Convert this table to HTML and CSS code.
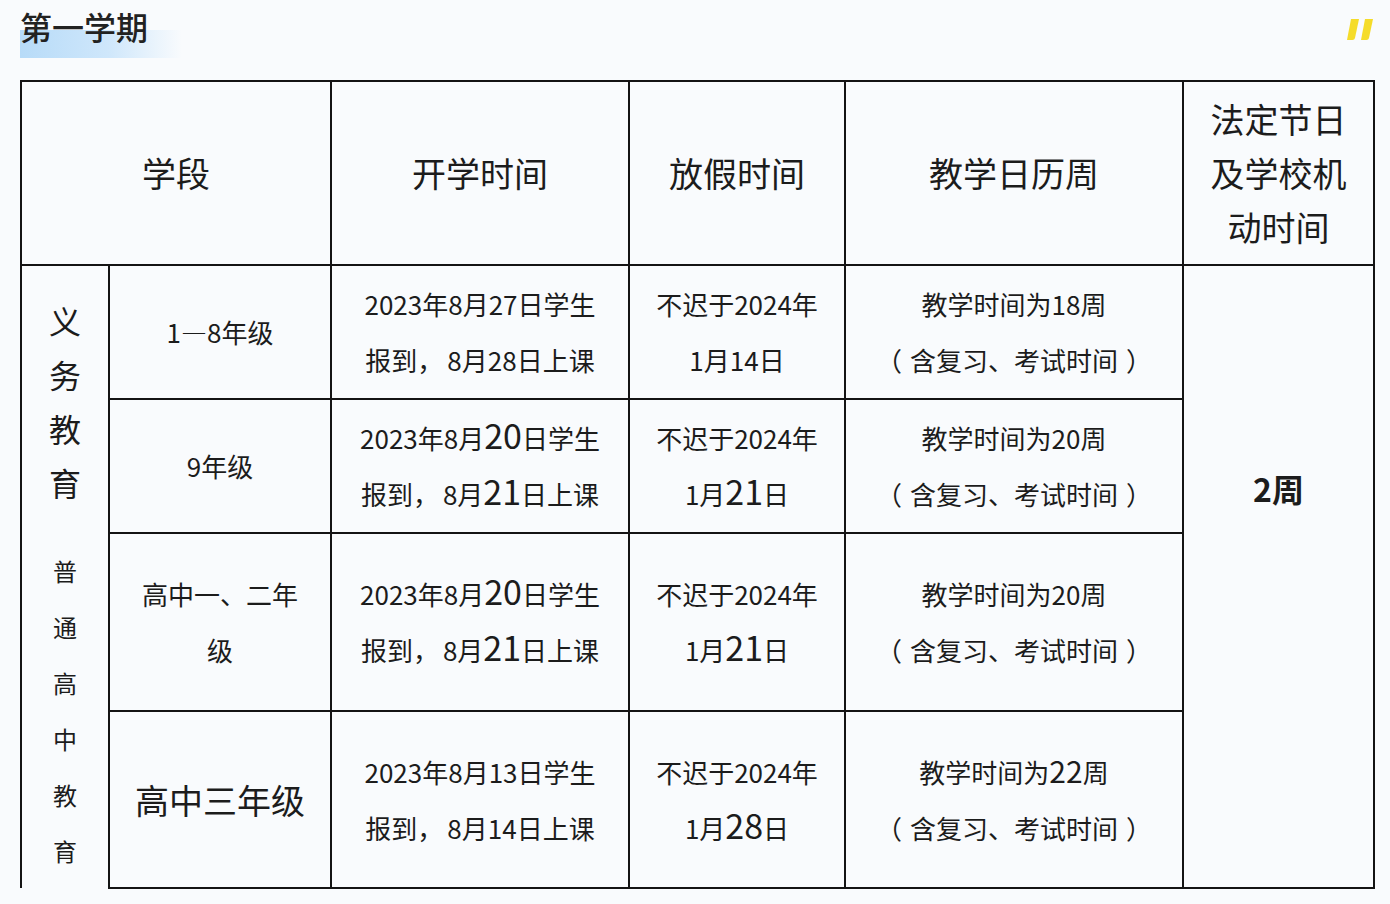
FILE: index.html
```html
<!DOCTYPE html>
<html lang="zh-CN">
<head>
<meta charset="utf-8">
<title>第一学期</title>
<link rel="stylesheet" href="styles.css">
</head>
<body>
<div class="page">
  <div class="top">
    <h1 class="title"><span class="title-hl"></span><span class="title-text">第一学期</span></h1>
    <svg class="quote" width="32" height="22" viewBox="0 0 32 22" aria-hidden="true">
      <path d="M7 0 H15 L11 19 Q10.5 21 8.5 21 H3 Z" fill="#f5dc2a"/>
      <path d="M21 0 H29 L25 19 Q24.5 21 22.5 21 H17 Z" fill="#f5dc2a"/>
    </svg>
  </div>
  <table class="cal">
    <colgroup>
      <col class="c1"><col class="c2"><col class="c3"><col class="c4"><col class="c5"><col class="c6">
    </colgroup>
    <tr class="r-head">
      <th colspan="2">学段</th>
      <th>开学时间</th>
      <th>放假时间</th>
      <th>教学日历周</th>
      <th class="holiday">法定节日<br>及学校机<br>动时间</th>
    </tr>
    <tr class="r1">
      <td rowspan="4" class="stage">
        <div class="stage-a"><span>义</span><span>务</span><span>教</span><span>育</span></div>
        <div class="stage-b"><span>普</span><span>通</span><span>高</span><span>中</span><span>教</span><span>育</span></div>
      </td>
      <td>1—8年级</td>
      <td>2023年8月27日学生<br>报到<span class="cm">，</span>8月28日上课</td>
      <td>不迟于2024年<br>1月14日</td>
      <td>教学时间为18周<br><span class="pl">（</span>含复习、考试时间<span class="pr">）</span></td>
      <td rowspan="4" class="weeks">2周</td>
    </tr>
    <tr class="r2">
      <td>9年级</td>
      <td>2023年8月<span class="big">20</span>日学生<br>报到<span class="cm">，</span>8月<span class="big">21</span>日上课</td>
      <td>不迟于2024年<br>1月<span class="big">21</span>日</td>
      <td>教学时间为20周<br><span class="pl">（</span>含复习、考试时间<span class="pr">）</span></td>
    </tr>
    <tr class="r3">
      <td>高中一、二年<br>级</td>
      <td>2023年8月<span class="big">20</span>日学生<br>报到<span class="cm">，</span>8月<span class="big">21</span>日上课</td>
      <td>不迟于2024年<br>1月<span class="big">21</span>日</td>
      <td>教学时间为20周<br><span class="pl">（</span>含复习、考试时间<span class="pr">）</span></td>
    </tr>
    <tr class="r4">
      <td class="grade-lg">高中三年级</td>
      <td>2023年8月13日学生<br>报到<span class="cm">，</span>8月14日上课</td>
      <td>不迟于2024年<br>1月<span class="big">28</span>日</td>
      <td>教学时间为<span class="mid">22</span>周<br><span class="pl">（</span>含复习、考试时间<span class="pr">）</span></td>
    </tr>
  </table>
</div>
</body>
</html>
```

FILE: styles.css
```css
html, body {
  margin: 0;
  padding: 0;
  background: #f9fbfd;
}
body {
  font-family: "Noto Sans CJK SC", "Noto Sans", sans-serif;
  color: #1c1c1c;
  text-spacing-trim: space-all;
}
.page {
  padding: 0 14px 0 20px;
}
.top {
  height: 80px;
  display: flex;
  justify-content: space-between;
  align-items: flex-start;
}
.title {
  margin: 0;
  position: relative;
  padding-top: 4px;
  font-size: 32px;
  font-weight: 500;
  line-height: 44px;
  color: #222;
}
.title-text {
  position: relative;
}
.title-hl {
  position: absolute;
  left: 0;
  top: 30px;
  width: 162px;
  height: 28px;
  background: linear-gradient(90deg, #b7dbf8 0%, #cfe7fb 55%, rgba(249,251,253,0) 100%);
}
.quote {
  margin-top: 19px;
}
.cal {
  border-collapse: collapse;
  table-layout: fixed;
  width: 1353px;
}
.c1 { width: 88px; }
.c2 { width: 222px; }
.c3 { width: 298px; }
.c4 { width: 216px; }
.c5 { width: 338px; }
.c6 { width: 191px; }
.cal th, .cal td {
  border: 2px solid #141414;
  padding: 0;
  text-align: center;
  vertical-align: middle;
}
.cal th {
  font-size: 34px;
  font-weight: 400;
  line-height: 54px;
}
.cal td {
  font-size: 26px;
  line-height: 56px;
}
.r-head { height: 184px; }
.r1 { height: 134px; }
.r2 { height: 134px; }
.r3 { height: 178px; }
.r4 { height: 177px; }
.holiday {
  padding-top: 4px;
}
.stage {
  vertical-align: top !important;
  border-bottom: none !important;
}
.stage-a, .stage-b {
  display: flex;
  flex-direction: column;
  align-items: center;
}
.stage-a {
  padding-top: 27px;
  font-size: 32px;
  line-height: 54px;
}
.stage-b {
  padding-top: 34px;
  font-size: 24px;
  line-height: 56px;
}
.pl {
  margin-right: 8px;
}
.pr {
  margin-left: 8px;
}
.cm {
  margin-right: 4px;
}
.big {
  font-size: 34px;
  line-height: 1;
}
.mid {
  font-size: 30px;
  line-height: 1;
}
.grade-lg {
  font-size: 34px !important;
}
.weeks {
  font-size: 32px !important;
  font-weight: 700;
  padding-bottom: 177px !important;
}
```
